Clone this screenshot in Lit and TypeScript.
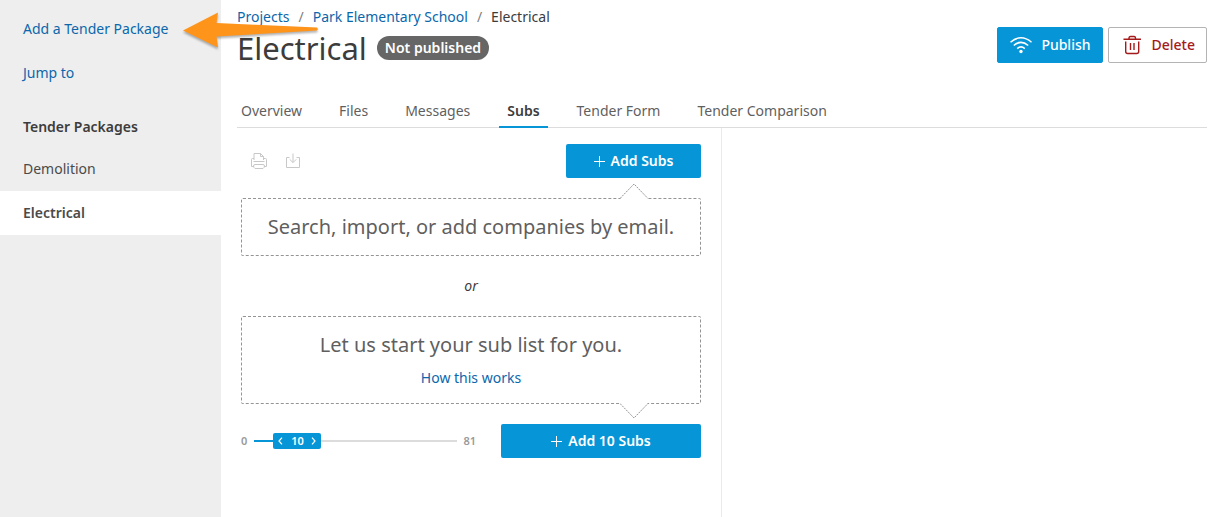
import { LitElement, html, css, svg } from "lit";
import { customElement, state } from "lit/decorators.js";
import { classMap } from "lit/directives/class-map.js";

const plus = svg`<path d="M5.5 0v11M0 5.5h11" />`;

@customElement("app-sidebar")
export class AppSidebar extends LitElement {
  static styles = css`
    :host { display: block; background: #eee; color: #4a4a4a; padding-top: 7px; }
    .row {
      display: flex; align-items: center; height: 44px; padding: 0 23px;
      color: inherit; text-decoration: none;
    }
    .action { color: #0b67ac; }
    .heading { margin: 12px 0 0; height: 40px; font-size: 14px; font-weight: 600; color: #3c3c3c; }
    .current { background: #fff; font-weight: 600; }
  `;

  private packages = ["Demolition", "Electrical"];

  render() {
    return html`
      <nav aria-label="Tender packages">
        <a class="row action" href="#add">Add a Tender Package</a>
        <a class="row action" href="#jump">Jump to</a>
        <h2 class="row heading">Tender Packages</h2>
        ${this.packages.map(
          (name) => html`<a class=${classMap({ row: true, current: name === "Electrical" })} href="#package">${name}</a>`
        )}
      </nav>
    `;
  }
}

@customElement("count-slider")
export class CountSlider extends LitElement {
  static properties = { value: { type: Number }, max: { type: Number } };
  declare value: number;
  declare max: number;

  static styles = css`
    :host { display: flex; align-items: center; font-size: 11px; font-weight: 600; color: #999; }
    .slider { position: relative; flex: 1; height: 16px; margin: 0 6px 0 7px; }
    input {
      display: block; width: 100%; height: 16px; margin: 0;
      appearance: none; -webkit-appearance: none; background: none; cursor: pointer;
    }
    input::-webkit-slider-runnable-track {
      height: 2px;
      background: linear-gradient(to right, #0696d7 var(--filled), #dcdcdc var(--filled));
    }
    input::-webkit-slider-thumb {
      -webkit-appearance: none; width: 48px; height: 16px; margin-top: -7px;
      border-radius: 2px; background: #0696d7;
    }
    .value {
      position: absolute; top: 0; width: 48px; height: 16px; box-sizing: border-box; padding: 0 5px;
      display: flex; align-items: center; justify-content: space-between;
      color: #fff; pointer-events: none;
    }
    svg { fill: none; stroke: currentColor; stroke-width: 1.2; }
  `;

  private changed(e: Event) {
    this.dispatchEvent(new CustomEvent("count", { detail: Number((e.target as HTMLInputElement).value) }));
  }

  render() {
    const part = this.value / this.max;
    return html`
      <span>0</span>
      <div class="slider">
        <input type="range" aria-label="Number of subs" min="0" max=${this.max} .value=${String(this.value)}
          style="--filled: ${part * 100}%" @input=${this.changed} />
        <div class="value" style="left: calc((100% - 48px) * ${part})">
          <svg width="5" height="8" viewBox="0 0 5 8"><path d="M4 .7 1 4l3 3.3" /></svg>
          <span>${this.value}</span>
          <svg width="5" height="8" viewBox="0 0 5 8"><path d="m1 .7 3 3.3-3 3.3" /></svg>
        </div>
      </div>
      <span>${this.max}</span>
    `;
  }
}

@customElement("app-root")
export class AppRoot extends LitElement {
  @state() private count = 10;

  static styles = css`
    :host {
      display: grid; grid-template-columns: 221px minmax(0, 1fr); position: relative;
      min-height: 100vh; background: #fff; color: #3c3c3c;
      font: 14px/20px "Noto Sans", sans-serif;
    }
    a { color: #0b67ac; text-decoration: none; }
    button { font: inherit; cursor: pointer; }
    svg { flex: none; fill: none; stroke: currentColor; }
    .main { display: flex; flex-direction: column; padding: 7px 12px 0 16px; }
    .header { display: flex; justify-content: space-between; align-items: center; }
    .crumbs { display: flex; gap: 9px; }
    .slash { color: #808080; }
    .title { display: flex; align-items: center; gap: 10px; height: 42px; }
    h1 { margin: 0; font-size: 31px; font-weight: 400; line-height: 42px; }
    .badge {
      height: 24px; line-height: 24px; padding: 0 8px; border-radius: 12px;
      background: #666; color: #fff; font-weight: 600;
    }
    .actions { display: flex; gap: 5px; padding-top: 14px; }
    .action {
      display: flex; align-items: center; gap: 8px; height: 36px; padding: 0 11px;
      border: 1px solid #0696d7; border-radius: 2px; background: #0696d7; color: #fff; font-weight: 500;
    }
    .delete { border-color: #b4b4b4; background: #fff; color: #a51b1b; }
    .tabs { display: flex; gap: 21px; margin-top: 25px; border-bottom: 1px solid #dcdcdc; padding-left: 4px; }
    .tab { height: 34px; line-height: 34px; margin-bottom: -1px; padding: 0 8px; color: #5f5f5f; box-sizing: border-box; }
    .tab:first-child { padding-left: 0; }
    .active { color: #3c3c3c; font-weight: 600; border-bottom: 2px solid #0696d7; }
    .panel {
      flex: 1; box-sizing: border-box; width: 485px; max-width: 100%;
      padding: 16px 20px 16px 4px; border-right: 1px solid #eaeaea;
    }
    .toolbar { display: flex; align-items: center; margin-bottom: 20px; }
    .tool { display: flex; padding: 0; margin-left: 9px; margin-right: 8px; border: 0; background: none; color: #c8c8c8; }
    .add {
      display: flex; align-items: center; justify-content: center; gap: 6px; height: 34px; padding: 0;
      border: 0; border-radius: 2px; background: #0696d7; color: #fff; font-weight: 600;
    }
    .short { width: 135px; margin-left: auto; }
    .long { width: 200px; }
    .callout {
      position: relative; box-sizing: border-box; padding: 13px 16px; text-align: center;
      border: 1px dashed #949494; border-radius: 2px; color: #5f5f5f;
    }
    .callout p { margin: 0; font-size: 20px; line-height: 30px; }
    .callout a { display: block; margin: 8px 0 2px; }
    .point { position: absolute; right: 52px; stroke: #949494; stroke-dasharray: 2 1; }
    .up { top: -16px; }
    .down { bottom: -16px; }
    .or { margin: 20px 0; text-align: center; font-style: italic; }
    .starter { display: flex; align-items: center; justify-content: space-between; gap: 25px; margin-top: 20px; }
    count-slider { flex: 1; }
    .arrow { position: absolute; left: 180px; top: 9px; pointer-events: none; stroke: none; filter: drop-shadow(0 2px 1px rgba(0, 0, 0, 0.3)); }
  `;

  private tabs = ["Overview", "Files", "Messages", "Subs", "Tender Form", "Tender Comparison"];

  render() {
    return html`
      <app-sidebar></app-sidebar>
      <main class="main">
        <header class="header">
          <div>
            <nav class="crumbs" aria-label="Breadcrumb">
              <a href="#projects">Projects</a><span class="slash">/</span>
              <a href="#school">Park Elementary School</a><span class="slash">/</span>
              <span>Electrical</span>
            </nav>
            <div class="title"><h1>Electrical</h1><span class="badge">Not published</span></div>
          </div>
          <div class="actions">
            <button class="action">
              <svg width="24" height="20" viewBox="0 0 24 20" stroke-width="1.5">
                <path d="M1.5 7.2Q12-1.600 22.500 7.200M4.800 10.500Q12 4.200 19.200 10.500M8.200 13.600Q12 10.200 15.800 13.600" />
                <circle cx="12" cy="16.500" r="1.700" fill="currentColor" stroke="none" />
              </svg>
              Publish
            </button>
            <button class="action delete">
              <svg width="24" height="20" viewBox="0 0 24 20" stroke-width="1.400">
                <path d="M3.500 4.300h17.500M9 4V3q0-1.500 1.500-1.500h3.500Q15.500 1.500 15.500 3v1M5.700 6.500v10q0 2 2 2h9q2 0 2-2v-10M10.500 8v7M14 8v7" />
              </svg>
              Delete
            </button>
          </div>
        </header>
        <nav class="tabs" aria-label="Package sections">
          ${this.tabs.map((t) => html`<a class=${classMap({ tab: true, active: t === "Subs" })} href="#tab">${t}</a>`)}
        </nav>
        <section class="panel">
          <div class="toolbar">
            <button class="tool" aria-label="Print">
              <svg width="18" height="18" viewBox="0 0 18 18">
                <path d="M4 8V1.500h6.500L13.500 4.500V8M10.500 1.500v3h3M4 6.500H2.500Q1.500 6.500 1.500 7.500V14.500h2.500M13.500 6.500h2q1 0 1 1V14.500H14M3.500 9.500h11M5 12.500h8q1.500 0 1.500 1.500t-1.500 2.500H5Q3.500 15.500 3.500 14T5 12.500z" />
              </svg>
            </button>
            <button class="tool" aria-label="Export">
              <svg width="16" height="18" viewBox="0 0 16 18">
                <path d="M4.500 5.500h-3v10h13v-10h-3M8 1.500v9M4.700 7.300 8 10.600l3.300-3.300" />
              </svg>
            </button>
            <button class="add short"><svg width="11" height="11">${plus}</svg>Add Subs</button>
          </div>
          <div class="callout">
            <svg class="point up" width="28" height="16" viewBox="0 0 28 16">
              <path d="M0 16 14 1l14 15z" fill="#fff" stroke="none" /><path d="M0 15.500 14 1l14 14.500" />
            </svg>
            <p>Search, import, or add companies by email.</p>
          </div>
          <div class="or">or</div>
          <div class="callout">
            <p>Let us start your sub list for you.</p>
            <a href="#how">How this works</a>
            <svg class="point down" width="28" height="16" viewBox="0 0 28 16">
              <path d="M0 0 14 15 28 0z" fill="#fff" stroke="none" /><path d="M0 .5 14 15 28 .5" />
            </svg>
          </div>
          <div class="starter">
            <count-slider .value=${this.count} .max=${81} @count=${(e: CustomEvent) => (this.count = e.detail)}></count-slider>
            <button class="add long"><svg width="11" height="11">${plus}</svg>Add ${this.count} Subs</button>
          </div>
        </section>
      </main>
      <svg class="arrow" width="142" height="44" viewBox="0 0 142 44" aria-hidden="true">
        <path d="M3 21.500 38 3.500 36.500 14 137 18.500q1.500 1.500 0 3L36.500 27.500 38 38.500z" fill="#ff941a" />
      </svg>
    `;
  }
}
